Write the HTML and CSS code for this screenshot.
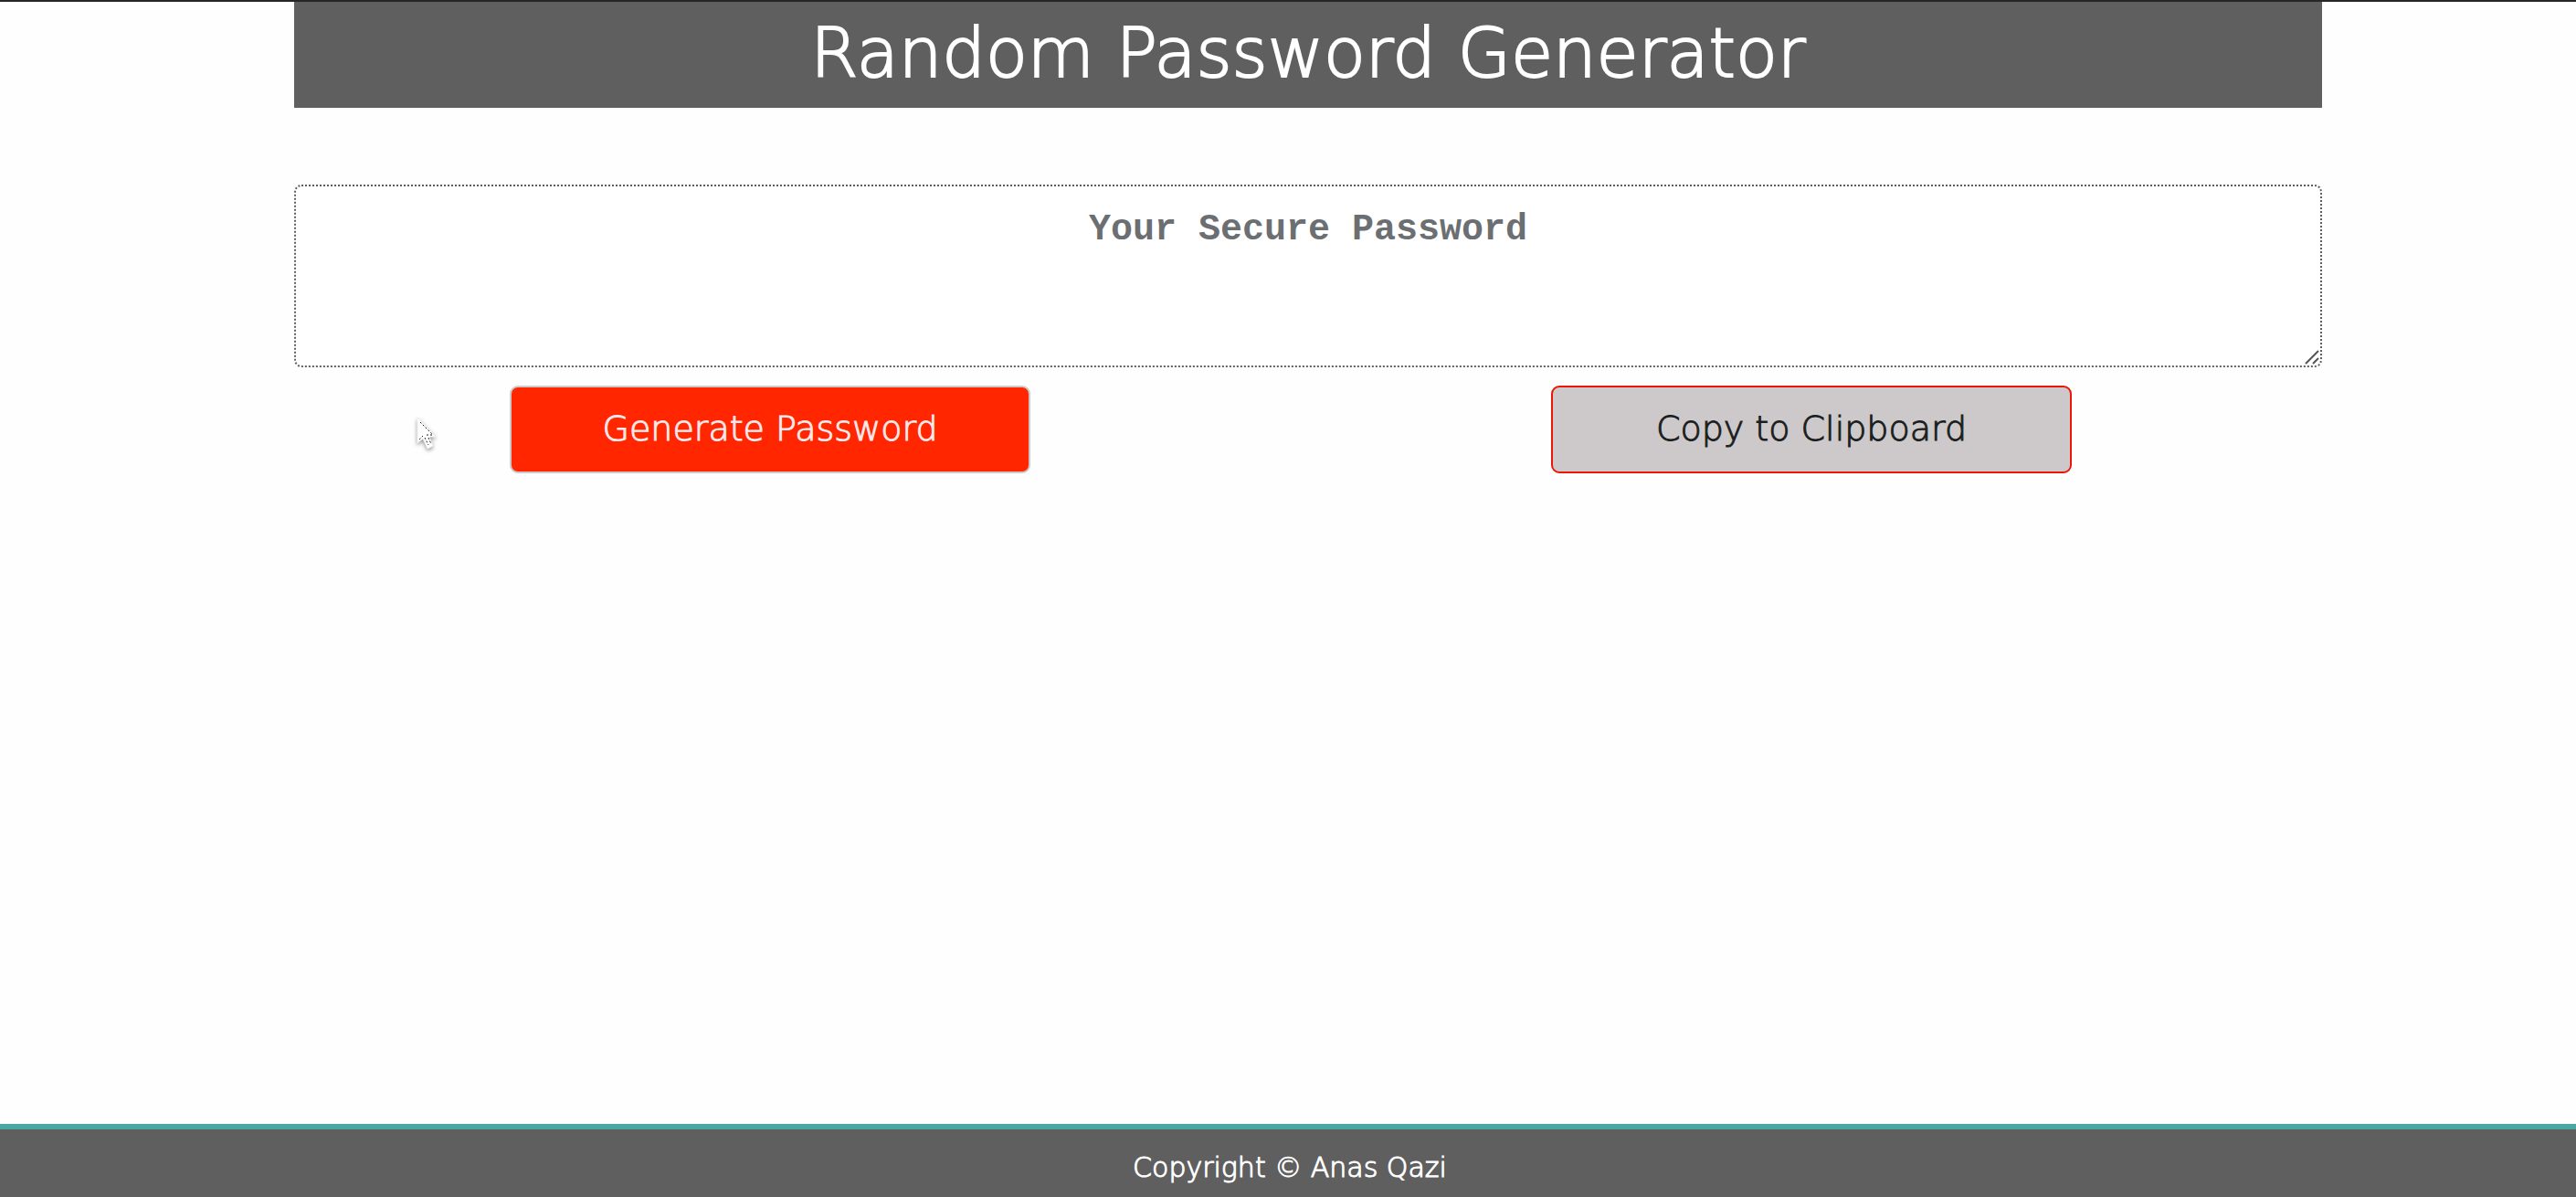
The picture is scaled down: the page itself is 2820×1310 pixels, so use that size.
FILE: index.html
```html
<!DOCTYPE html>
<html lang="en">
<head>
  <meta charset="utf-8">
  <meta name="viewport" content="width=device-width, initial-scale=1">
  <title>Random Password Generator</title>
  <link rel="stylesheet" href="styles.css">
</head>
<body>
  <main class="page">
    <header class="banner">
      <h1 class="title">Random Password Generator</h1>
    </header>
    <div class="output">
      <textarea class="password" aria-label="Your Secure Password" placeholder="Your Secure Password"></textarea>
      <svg class="grip" viewBox="0 0 16 16" aria-hidden="true"><path d="M1 15 15 1M9 15l6-6"/></svg>
    </div>
    <div class="actions">
      <button class="btn btn-generate" type="button">Generate Password</button>
      <button class="btn btn-copy" type="button">Copy to Clipboard</button>
    </div>
  </main>
  <footer class="footer">Copyright © Anas Qazi</footer>
  <svg class="cursor" viewBox="0 0 26 40" aria-hidden="true">
    <path class="cursor-body" d="M2 2V30L8 25L13 36L19 33L15 23H22Z"/>
    <path class="cursor-line" d="M5 7 19 21M12 21h8M4 26l4-4M10 24l4 8M14 24l3 7"/>
  </svg>
</body>
</html>
```
FILE: styles.css
```css
* {
  box-sizing: border-box;
}

body {
  display: flex;
  flex-direction: column;
  min-height: 100vh;
  margin: 0;
  border-top: 2px solid #262626;
  background: #fefefe;
  font-family: "DejaVu Sans", sans-serif;
  font-weight: 200;
  -webkit-text-stroke-width: 1px;
}

.page {
  width: 100%;
  max-width: 2286px;
  margin: 0 auto;
  padding-left: 6px;
}

.banner,
.output {
  margin-left: 49px;
  margin-right: 11px;
}

.banner {
  padding-bottom: 4px;
  background: #5f5f5f;
}

.title {
  margin: 0;
  color: #fff;
  font-size: 75px;
  font-weight: 200;
  line-height: 112px;
  text-align: center;
  -webkit-text-stroke-width: 2px;
}

.output {
  position: relative;
  margin-top: 84px;
}

.password {
  display: block;
  width: 100%;
  height: 200px;
  padding: 18px 24px;
  border: 2px dotted #5f5f5f;
  border-radius: 8px;
  background: #fff;
  color: #495057;
  font: bold 40px/60px "Courier New", "Liberation Mono", monospace;
  text-align: center;
  resize: none;
  -webkit-text-stroke-width: 0;
}

.password::placeholder {
  color: #6c6f72;
  opacity: 1;
}

.grip {
  position: absolute;
  right: 3px;
  bottom: 3px;
  width: 16px;
  height: 16px;
  fill: none;
  stroke: #555;
  stroke-width: 2;
}

.actions {
  display: grid;
  grid-template-columns: 1fr 1fr;
  justify-items: center;
  margin-top: 20px;
}

.btn {
  width: 50%;
  height: 96px;
  padding: 0 0 2px;
  border: 2px solid;
  border-radius: 9px;
  font: inherit;
  font-size: 38px;
  -webkit-text-stroke-width: 1px;
}

.btn-generate {
  border-color: #cdc9ca;
  background: #ff2600;
  color: #fbe8ec;
}

.btn-copy {
  border-color: #ec1608;
  background: #cdc9ca;
  color: #1b1e20;
}

.footer {
  margin-top: auto;
  padding: 18px 0 8px 4px;
  border-top: 6px solid #4aa8a3;
  background: #5f5f5f;
  color: #fff;
  font-size: 30px;
  line-height: 48px;
  text-align: center;
}

.cursor {
  position: absolute;
  left: 455px;
  top: 455px;
  width: 26px;
  height: 40px;
  overflow: visible;
  filter: drop-shadow(0 2px 2px #0006);
}

.cursor-body {
  fill: #fff;
  stroke: #eee;
}

.cursor-line {
  fill: none;
  stroke: #222;
  stroke-width: 1;
  stroke-dasharray: 2 2;
}
```
